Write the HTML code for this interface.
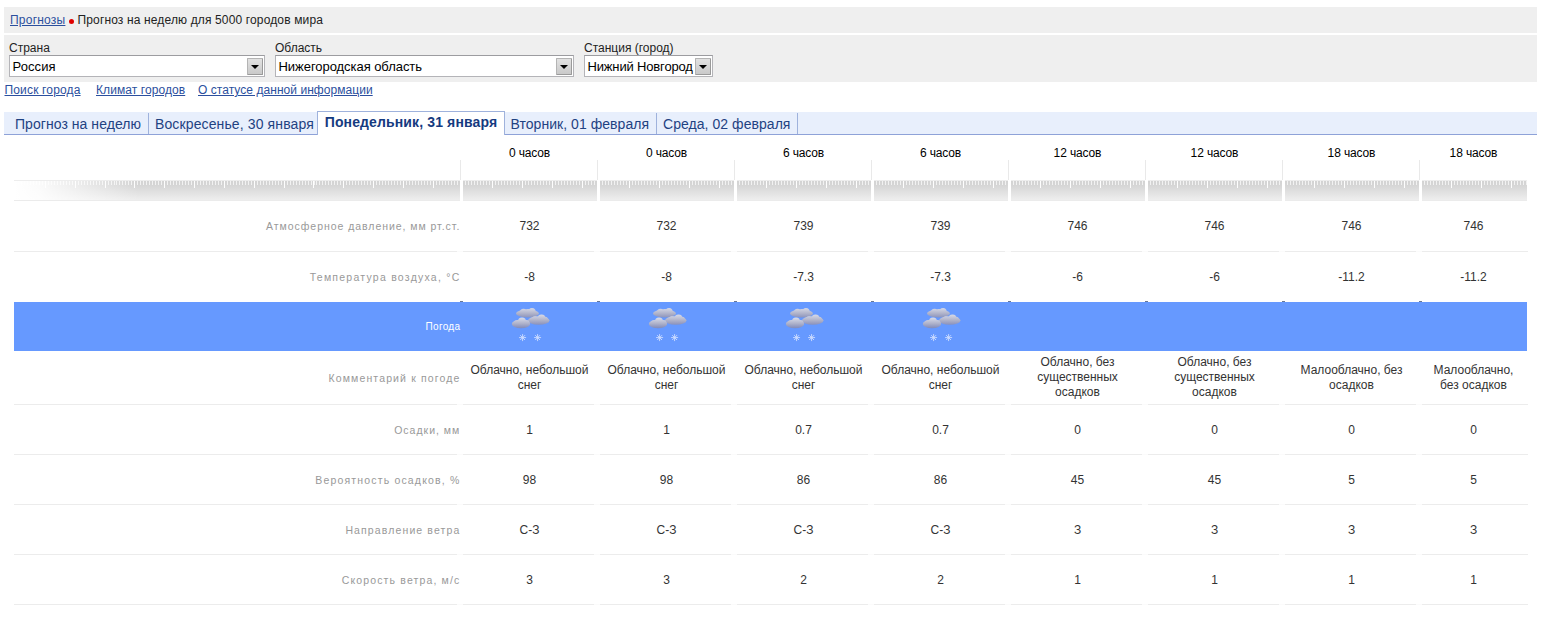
<!DOCTYPE html>
<html><head><meta charset="utf-8">
<style>
html,body{margin:0;padding:0;background:#fff;}
body{width:1543px;height:631px;position:relative;overflow:hidden;font-family:"Liberation Sans",sans-serif;}
.abs{position:absolute;white-space:nowrap;}
.band{position:absolute;left:4px;width:1533px;background:#efefef;}
.t12{font-size:12px;color:#222;}
a.lnk{color:#2b4f9e;text-decoration:underline;}
.sel{position:absolute;top:55px;height:22px;background:#fff;border:1px solid #b4b4b8;border-top-color:#9c9ca0;box-sizing:border-box;}
.sel span{position:absolute;left:2.5px;top:3px;font-size:13px;color:#000;}
.sel i{position:absolute;right:1px;top:2px;width:16px;height:17px;background:linear-gradient(#e2e2e2,#c9c9c9);border:1px solid #b4b4b4;border-right-color:#9a9a9a;border-bottom-color:#9a9a9a;box-sizing:border-box;border-radius:1px;}
.sel i:after{content:"";position:absolute;left:3px;top:6px;border:4px solid transparent;border-top:4px solid #000;border-bottom:0;}
#tabs{position:absolute;left:4px;top:112px;width:1533px;height:22px;background:#e8effc;border-bottom:1px solid #8ea2d8;}
.tab{position:absolute;top:112px;height:22px;font-size:14px;letter-spacing:0.05px;color:#1f4282;line-height:24px;white-space:nowrap;}
.tsep{position:absolute;top:113px;width:1px;height:21px;background:#9fb2dc;}
#atab{position:absolute;left:317px;top:111px;width:188px;letter-spacing:0.13px;height:24px;background:#fff;border:1px solid #9fb2dc;border-bottom:0;box-sizing:border-box;font-size:14px;font-weight:bold;color:#153a80;line-height:21px;text-align:center;white-space:nowrap;}

#ruler{position:absolute;left:14px;top:180px;width:1513px;height:21px;border-top:1px solid #ededed;border-bottom:1px solid #ebebeb;box-sizing:border-box;
 background:linear-gradient(to bottom,#d3d3d3 0,#d6d6d6 25%,#eeeeee 100%);}
.rt{position:absolute;top:181px;height:7px;
 background:
  repeating-linear-gradient(to right,rgba(255,255,255,.95) 0,rgba(255,255,255,.95) 1px,transparent 1px,transparent 30.1px) 0 0/100% 7px no-repeat,
  repeating-linear-gradient(to right,rgba(255,255,255,.7) 0,rgba(255,255,255,.7) 1px,transparent 1px,transparent 3.01px) 0 0/100% 4px no-repeat;}
.rt.l{background:
  repeating-linear-gradient(to right,rgba(255,255,255,.95) 0,rgba(255,255,255,.95) 1px,transparent 1px,transparent 29.85px) 0 0/100% 7px no-repeat,
  repeating-linear-gradient(to right,rgba(255,255,255,.7) 0,rgba(255,255,255,.7) 1px,transparent 1px,transparent 2.985px) 0 0/100% 4px no-repeat;}
#rfade{position:absolute;left:14px;top:181px;width:130px;height:19px;background:linear-gradient(to right,#fff 0,rgba(255,255,255,.9) 25px,rgba(255,255,255,0) 125px);}
.hd{position:absolute;top:146px;letter-spacing:-0.13px;font-size:12px;color:#000;text-align:center;white-space:nowrap;}
.vs{position:absolute;top:160px;width:1px;height:20px;background:#e9e9e9;margin-left:-1px;}
.vw{position:absolute;top:180px;width:3px;height:21px;background:#fff;margin-left:-1px;}
.hl{position:absolute;left:14px;width:1514px;height:1px;background:#ececec;}
.gp{position:absolute;width:6px;height:1px;background:rgba(255,255,255,.8);}
#blue{position:absolute;left:14px;top:302px;width:1513px;height:49px;background:#6699ff;}
.dot{position:absolute;top:301px;width:3px;height:1px;margin-left:-1px;background:#6a7894;}
.lb{position:absolute;left:14px;width:446.3px;text-align:right;font-size:10.5px;letter-spacing:1px;color:#999;white-space:nowrap;}
.lb.w{color:#fff;font-size:10px;letter-spacing:0.3px;}
.v{position:absolute;text-align:center;font-size:12px;color:#333;white-space:nowrap;}
.cm{position:absolute;text-align:center;font-size:12px;line-height:15px;color:#333;}
.ic{position:absolute;top:305px;}
</style></head><body>
<div class="band" style="top:7px;height:26px;"></div>
<div class="band" style="top:35px;height:47px;"></div>
<div class="abs t12" style="left:10px;top:13px;letter-spacing:0.22px"><a class="lnk">Прогнозы</a></div>
<div class="abs" style="left:69px;top:19px;width:5px;height:5px;border-radius:3px;background:#e00000;"></div>
<div class="abs t12" style="left:77.5px;top:13px;letter-spacing:0.14px">Прогноз на неделю для 5000 городов мира</div>
<div class="abs t12" style="left:9px;top:41px;">Страна</div>
<div class="abs t12" style="left:275px;top:41px;">Область</div>
<div class="abs t12" style="left:584px;top:41px;">Станция (город)</div>
<div class="sel" style="left:9px;width:256px;"><span style="letter-spacing:0.08px">Россия</span><i></i></div>
<div class="sel" style="left:275px;width:299px;"><span style="letter-spacing:-0.05px">Нижегородская область</span><i></i></div>
<div class="sel" style="left:584px;width:129px;"><span style="letter-spacing:-0.16px">Нижний Новгород</span><i></i></div>
<div class="abs t12" style="left:4.5px;top:83px;letter-spacing:0.16px"><a class="lnk">Поиск города</a></div>
<div class="abs t12" style="left:96px;top:83px;letter-spacing:0.08px"><a class="lnk">Климат городов</a></div>
<div class="abs t12" style="left:198px;top:83px;letter-spacing:0.05px"><a class="lnk">О статусе данной информации</a></div>
<div id="tabs"></div>
<div class="tab" style="left:15px;">Прогноз на неделю</div>
<div class="tsep" style="left:148px;"></div>
<div class="tab" style="left:155px;letter-spacing:0.12px">Воскресенье, 30 января</div>
<div id="atab">Понедельник, 31 января</div>
<div class="tab" style="left:510.5px;">Вторник, 01 февраля</div>
<div class="tsep" style="left:656px;"></div>
<div class="tab" style="left:663px;">Среда, 02 февраля</div>
<div class="tsep" style="left:797px;"></div>
<svg width="0" height="0" style="position:absolute"><defs>
<linearGradient id="g1" gradientUnits="userSpaceOnUse" x1="0" y1="2" x2="0" y2="13"><stop offset="0" stop-color="#dcdfec"/><stop offset="0.55" stop-color="#b3b6cc"/><stop offset="1" stop-color="#8890ba"/></linearGradient>
<linearGradient id="g2" gradientUnits="userSpaceOnUse" x1="0" y1="8" x2="0" y2="21"><stop offset="0" stop-color="#e2e4ee"/><stop offset="0.55" stop-color="#b0b3ca"/><stop offset="1" stop-color="#7f88b8"/></linearGradient>
<linearGradient id="g3" gradientUnits="userSpaceOnUse" x1="0" y1="12" x2="0" y2="24"><stop offset="0" stop-color="#dfe2ee"/><stop offset="0.55" stop-color="#adb1ca"/><stop offset="1" stop-color="#7a84b6"/></linearGradient>
<g id="snow">
<g fill="url(#g1)"><ellipse cx="16.5" cy="8.5" rx="11.5" ry="4"/><circle cx="12.5" cy="7.3" r="3.6"/><circle cx="21" cy="6.6" r="3.6"/><circle cx="17" cy="6.9" r="3"/></g>
<g fill="url(#g2)"><ellipse cx="27.7" cy="15.5" rx="10.8" ry="4.3"/><circle cx="30.5" cy="13.4" r="4"/><circle cx="24" cy="14.4" r="3.2"/><circle cx="34" cy="14.8" r="3"/></g>
<g fill="url(#g3)"><ellipse cx="10" cy="19" rx="9.2" ry="4.2"/><circle cx="11" cy="16.5" r="4"/><circle cx="5.5" cy="18" r="2.8"/><circle cx="15.5" cy="18" r="3"/></g>
<g stroke="#eef2ff" stroke-width="0.9" fill="none" opacity="0.78"><path d="M8.1 32.6h7M11.6 29.1v7M9.2 30.2l4.8 4.8M14 30.2l-4.8 4.8"/><path d="M23.1 32.6h7M26.6 29.1v7M24.2 30.2l4.8 4.8M29 30.2l-4.8 4.8"/></g>
</g></defs></svg>
<div id="ruler"></div>
<div class="rt l" style="left:15.2px;width:445px;"></div>
<div class="rt" style="left:461.8px;width:136.2px;"></div>
<div class="rt" style="left:598.8px;width:136.2px;"></div>
<div class="rt" style="left:735.8px;width:136.2px;"></div>
<div class="rt" style="left:872.8px;width:136.2px;"></div>
<div class="rt" style="left:1009.8px;width:136.2px;"></div>
<div class="rt" style="left:1146.8px;width:136.2px;"></div>
<div class="rt" style="left:1283.8px;width:136.2px;"></div>
<div class="rt" style="left:1420.8px;width:106.2px;"></div>
<div id="rfade"></div>
<div class="hd" style="left:461px;width:137px;">0 часов</div>
<div class="hd" style="left:598px;width:137px;">0 часов</div>
<div class="hd" style="left:735px;width:137px;">6 часов</div>
<div class="hd" style="left:872px;width:137px;">6 часов</div>
<div class="hd" style="left:1009px;width:137px;">12 часов</div>
<div class="hd" style="left:1146px;width:137px;">12 часов</div>
<div class="hd" style="left:1283px;width:137px;">18 часов</div>
<div class="hd" style="left:1420px;width:107px;">18 часов</div>
<div class="vs" style="left:461px;"></div><div class="vw" style="left:461px;"></div>
<div class="vs" style="left:598px;"></div><div class="vw" style="left:598px;"></div>
<div class="vs" style="left:735px;"></div><div class="vw" style="left:735px;"></div>
<div class="vs" style="left:872px;"></div><div class="vw" style="left:872px;"></div>
<div class="vs" style="left:1009px;"></div><div class="vw" style="left:1009px;"></div>
<div class="vs" style="left:1146px;"></div><div class="vw" style="left:1146px;"></div>
<div class="vs" style="left:1283px;"></div><div class="vw" style="left:1283px;"></div>
<div class="vs" style="left:1420px;"></div><div class="vw" style="left:1420px;"></div>
<div class="hl" style="top:251px;"></div>
<div class="hl" style="top:404px;"></div>
<div class="hl" style="top:454px;"></div>
<div class="hl" style="top:504px;"></div>
<div class="hl" style="top:554px;"></div>
<div class="hl" style="top:604px;"></div>
<i class="gp" style="left:457px;top:251px"></i>
<i class="gp" style="left:594px;top:251px"></i>
<i class="gp" style="left:731px;top:251px"></i>
<i class="gp" style="left:868px;top:251px"></i>
<i class="gp" style="left:1005px;top:251px"></i>
<i class="gp" style="left:1142px;top:251px"></i>
<i class="gp" style="left:1279px;top:251px"></i>
<i class="gp" style="left:1416px;top:251px"></i>
<i class="gp" style="left:457px;top:404px"></i>
<i class="gp" style="left:594px;top:404px"></i>
<i class="gp" style="left:731px;top:404px"></i>
<i class="gp" style="left:868px;top:404px"></i>
<i class="gp" style="left:1005px;top:404px"></i>
<i class="gp" style="left:1142px;top:404px"></i>
<i class="gp" style="left:1279px;top:404px"></i>
<i class="gp" style="left:1416px;top:404px"></i>
<i class="gp" style="left:457px;top:454px"></i>
<i class="gp" style="left:594px;top:454px"></i>
<i class="gp" style="left:731px;top:454px"></i>
<i class="gp" style="left:868px;top:454px"></i>
<i class="gp" style="left:1005px;top:454px"></i>
<i class="gp" style="left:1142px;top:454px"></i>
<i class="gp" style="left:1279px;top:454px"></i>
<i class="gp" style="left:1416px;top:454px"></i>
<i class="gp" style="left:457px;top:504px"></i>
<i class="gp" style="left:594px;top:504px"></i>
<i class="gp" style="left:731px;top:504px"></i>
<i class="gp" style="left:868px;top:504px"></i>
<i class="gp" style="left:1005px;top:504px"></i>
<i class="gp" style="left:1142px;top:504px"></i>
<i class="gp" style="left:1279px;top:504px"></i>
<i class="gp" style="left:1416px;top:504px"></i>
<i class="gp" style="left:457px;top:554px"></i>
<i class="gp" style="left:594px;top:554px"></i>
<i class="gp" style="left:731px;top:554px"></i>
<i class="gp" style="left:868px;top:554px"></i>
<i class="gp" style="left:1005px;top:554px"></i>
<i class="gp" style="left:1142px;top:554px"></i>
<i class="gp" style="left:1279px;top:554px"></i>
<i class="gp" style="left:1416px;top:554px"></i>
<i class="gp" style="left:457px;top:604px"></i>
<i class="gp" style="left:594px;top:604px"></i>
<i class="gp" style="left:731px;top:604px"></i>
<i class="gp" style="left:868px;top:604px"></i>
<i class="gp" style="left:1005px;top:604px"></i>
<i class="gp" style="left:1142px;top:604px"></i>
<i class="gp" style="left:1279px;top:604px"></i>
<i class="gp" style="left:1416px;top:604px"></i>
<div id="blue"></div>
<div class="dot" style="left:461px;"></div>
<div class="dot" style="left:598px;"></div>
<div class="dot" style="left:735px;"></div>
<div class="dot" style="left:872px;"></div>
<div class="dot" style="left:1009px;"></div>
<div class="dot" style="left:1146px;"></div>
<div class="dot" style="left:1283px;"></div>
<div class="dot" style="left:1420px;"></div>
<div class="lb w" style="top:321px;">Погода</div>
<div class="lb" style="top:220px;letter-spacing:0.955px;margin-left:-0.05px">Атмосферное давление, мм рт.ст.</div>
<div class="v" style="left:461px;width:137px;top:219px;">732</div>
<div class="v" style="left:598px;width:137px;top:219px;">732</div>
<div class="v" style="left:735px;width:137px;top:219px;">739</div>
<div class="v" style="left:872px;width:137px;top:219px;">739</div>
<div class="v" style="left:1009px;width:137px;top:219px;">746</div>
<div class="v" style="left:1146px;width:137px;top:219px;">746</div>
<div class="v" style="left:1283px;width:137px;top:219px;">746</div>
<div class="v" style="left:1420px;width:107px;top:219px;">746</div>
<div class="lb" style="top:271px;letter-spacing:1.24px;margin-left:0.24px">Температура воздуха, °C</div>
<div class="v" style="left:461px;width:137px;top:270px;">-8</div>
<div class="v" style="left:598px;width:137px;top:270px;">-8</div>
<div class="v" style="left:735px;width:137px;top:270px;">-7.3</div>
<div class="v" style="left:872px;width:137px;top:270px;">-7.3</div>
<div class="v" style="left:1009px;width:137px;top:270px;">-6</div>
<div class="v" style="left:1146px;width:137px;top:270px;">-6</div>
<div class="v" style="left:1283px;width:137px;top:270px;">-11.2</div>
<div class="v" style="left:1420px;width:107px;top:270px;">-11.2</div>
<div class="lb" style="top:424px;letter-spacing:1.0px;margin-left:0.00px">Осадки, мм</div>
<div class="v" style="left:461px;width:137px;top:423px;">1</div>
<div class="v" style="left:598px;width:137px;top:423px;">1</div>
<div class="v" style="left:735px;width:137px;top:423px;">0.7</div>
<div class="v" style="left:872px;width:137px;top:423px;">0.7</div>
<div class="v" style="left:1009px;width:137px;top:423px;">0</div>
<div class="v" style="left:1146px;width:137px;top:423px;">0</div>
<div class="v" style="left:1283px;width:137px;top:423px;">0</div>
<div class="v" style="left:1420px;width:107px;top:423px;">0</div>
<div class="lb" style="top:474px;letter-spacing:1.17px;margin-left:0.17px">Вероятность осадков, %</div>
<div class="v" style="left:461px;width:137px;top:473px;">98</div>
<div class="v" style="left:598px;width:137px;top:473px;">98</div>
<div class="v" style="left:735px;width:137px;top:473px;">86</div>
<div class="v" style="left:872px;width:137px;top:473px;">86</div>
<div class="v" style="left:1009px;width:137px;top:473px;">45</div>
<div class="v" style="left:1146px;width:137px;top:473px;">45</div>
<div class="v" style="left:1283px;width:137px;top:473px;">5</div>
<div class="v" style="left:1420px;width:107px;top:473px;">5</div>
<div class="lb" style="top:524px;letter-spacing:1.12px;margin-left:0.12px">Направление ветра</div>
<div class="v" style="left:461px;width:137px;top:523px;">С-З</div>
<div class="v" style="left:598px;width:137px;top:523px;">С-З</div>
<div class="v" style="left:735px;width:137px;top:523px;">С-З</div>
<div class="v" style="left:872px;width:137px;top:523px;">С-З</div>
<div class="v" style="left:1009px;width:137px;top:523px;">З</div>
<div class="v" style="left:1146px;width:137px;top:523px;">З</div>
<div class="v" style="left:1283px;width:137px;top:523px;">З</div>
<div class="v" style="left:1420px;width:107px;top:523px;">З</div>
<div class="lb" style="top:574px;letter-spacing:1.15px;margin-left:0.15px">Скорость ветра, м/с</div>
<div class="v" style="left:461px;width:137px;top:573px;">3</div>
<div class="v" style="left:598px;width:137px;top:573px;">3</div>
<div class="v" style="left:735px;width:137px;top:573px;">2</div>
<div class="v" style="left:872px;width:137px;top:573px;">2</div>
<div class="v" style="left:1009px;width:137px;top:573px;">1</div>
<div class="v" style="left:1146px;width:137px;top:573px;">1</div>
<div class="v" style="left:1283px;width:137px;top:573px;">1</div>
<div class="v" style="left:1420px;width:107px;top:573px;">1</div>
<div class="lb" style="top:372px;letter-spacing:1.13px;margin-left:0.13px">Комментарий к погоде</div>
<div class="cm" style="left:461px;width:137px;top:362.5px;">Облачно, небольшой<br>снег</div>
<div class="cm" style="left:598px;width:137px;top:362.5px;">Облачно, небольшой<br>снег</div>
<div class="cm" style="left:735px;width:137px;top:362.5px;">Облачно, небольшой<br>снег</div>
<div class="cm" style="left:872px;width:137px;top:362.5px;">Облачно, небольшой<br>снег</div>
<div class="cm" style="left:1009px;width:137px;top:355.0px;">Облачно, без<br>существенных<br>осадков</div>
<div class="cm" style="left:1146px;width:137px;top:355.0px;">Облачно, без<br>существенных<br>осадков</div>
<div class="cm" style="left:1283px;width:137px;top:362.5px;">Малооблачно, без<br>осадков</div>
<div class="cm" style="left:1420px;width:107px;top:362.5px;">Малооблачно,<br>без осадков</div>
<svg class="ic" style="left:511px;" width="40" height="38" viewBox="0 0 40 38"><use href="#snow"/></svg>
<svg class="ic" style="left:648px;" width="40" height="38" viewBox="0 0 40 38"><use href="#snow"/></svg>
<svg class="ic" style="left:785px;" width="40" height="38" viewBox="0 0 40 38"><use href="#snow"/></svg>
<svg class="ic" style="left:922px;" width="40" height="38" viewBox="0 0 40 38"><use href="#snow"/></svg>
</body></html>
